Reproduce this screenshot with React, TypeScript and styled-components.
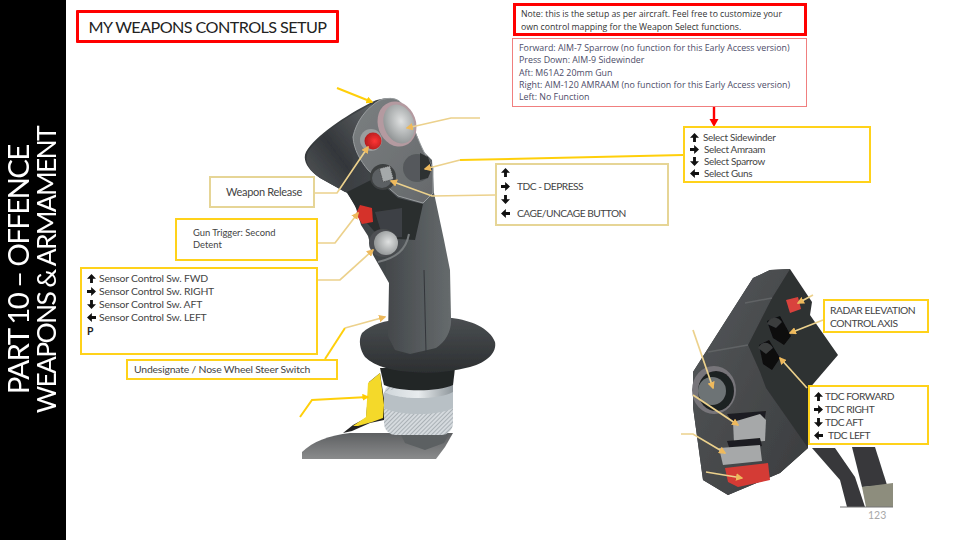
import React from "react";
import styled, { createGlobalStyle } from "styled-components";

const Global = createGlobalStyle`
  html, body { margin: 0; padding: 0; background: #fff; }
  #root { width: 960px; height: 540px; overflow: hidden; }
`;

const Slide = styled.div`
  display: flex;
  width: 960px;
  height: 540px;
  background: #fff;
  font-family: Lato, "Open Sans", sans-serif;
`;

const Sidebar = styled.aside`
  width: 66px;
  height: 540px;
  flex: none;
  background: #000;
  color: #fff;
  display: flex;
  align-items: center;
  justify-content: center;
  padding-right: 3px;
  box-sizing: border-box;
`;

const SideTitle = styled.div`
  writing-mode: vertical-rl;
  transform: rotate(180deg);
  text-align: center;
  white-space: nowrap;
`;

const SideLine = styled.div<{ $size: number }>`
  font-size: ${(p) => p.$size}px;
  line-height: 29px;
  letter-spacing: -1.7px;
`;

const Canvas = styled.main`
  position: relative;
  flex: 1;
  height: 540px;
`;

const Drawing = styled.svg`
  position: absolute;
  left: 0;
  top: 0;
`;

const Title = styled.h1`
  position: absolute;
  left: 10px;
  top: 10px;
  width: 263px;
  height: 33px;
  box-sizing: border-box;
  margin: 0;
  border: 3px solid #f00;
  border-radius: 1px;
  display: flex;
  align-items: center;
  justify-content: center;
  font-size: 16.2px;
  font-weight: 400;
  letter-spacing: -0.58px;
  color: #222;
  white-space: nowrap;
`;

const Label = styled.div<{ $x: number; $y: number; $w: number; $h: number; $tone?: "yellow" | "tan"; $px?: number; $py?: number; $size?: number; $lh?: number; $track?: number }>`
  position: absolute;
  left: ${(p) => p.$x - 66}px;
  top: ${(p) => p.$y}px;
  width: ${(p) => p.$w}px;
  height: ${(p) => p.$h}px;
  box-sizing: border-box;
  background: #fff;
  border: 2px solid ${(p) => (p.$tone === "tan" ? "#e6d596" : "#ffd21a")};
  padding: ${(p) => p.$py ?? 0}px 0 0 ${(p) => p.$px ?? 0}px;
  font-size: ${(p) => p.$size ?? 10.5}px;
  line-height: ${(p) => p.$lh ?? 13}px;
  letter-spacing: ${(p) => p.$track ?? 0}px;
  color: #444;
  white-space: nowrap;
`;

const Row = styled.div<{ $gap?: number; $h?: number }>`
  display: flex;
  align-items: center;
  gap: ${(p) => p.$gap ?? 3}px;
  height: ${(p) => (p.$h ? `${p.$h}px` : "auto")};
`;

const NoteBox = styled.div`
  position: absolute;
  left: 447px;
  top: 3px;
  width: 294px;
  height: 33px;
  box-sizing: border-box;
  border: 3px solid #f00;
  padding: 2px 0 0 5px;
  font-family: "Open Sans", sans-serif;
  font-size: 8.7px;
  line-height: 12.5px;
  color: #333;
  white-space: nowrap;
`;

const MappingBox = styled.div`
  position: absolute;
  left: 446px;
  top: 38px;
  width: 295px;
  height: 69px;
  box-sizing: border-box;
  border: 1px solid #f07f7f;
  padding: 3px 0 0 6px;
  font-family: "Open Sans", sans-serif;
  font-size: 8.85px;
  line-height: 12.3px;
  color: #4c4c68;
  white-space: nowrap;
`;

const PageNumber = styled.span`
  position: absolute;
  left: 802px;
  top: 509px;
  font-size: 10.5px;
  color: #a8a8a8;
`;

const ArrowSvg = styled.svg<{ $dir: number }>`
  flex: none;
  transform: rotate(${(p) => p.$dir}deg);
`;

const dirs = { up: 0, right: 90, down: 180, left: 270 };

function Arrow({ dir, size = 9 }: { dir: keyof typeof dirs; size?: number }) {
  return (
    <ArrowSvg $dir={dirs[dir]} width={size} height={size} viewBox="0 0 10 10">
      <path d="M5 0 L10 5.4 L6.6 5.4 L6.6 10 L3.4 10 L3.4 5.4 L0 5.4 Z" fill="#111" />
    </ArrowSvg>
  );
}

const Bold = styled.span`
  font-weight: 700;
  color: #222;
`;

type Seg = { d: string; tan?: boolean; head?: boolean };
const leaders: Seg[] = [
  { d: "M337 88 L372 102", head: true },
  { d: "M480 118 L451 118 L407 128", tan: true, head: true },
  { d: "M683 155 L460 160" },
  { d: "M460 160 L425 169", tan: true, head: true },
  { d: "M495 195 L432 196 L391 181", tan: true, head: true },
  { d: "M315 193 L337 193 L368 147", tan: true, head: true },
  { d: "M318 243 L335 243 L358 213", tan: true, head: true },
  { d: "M318 280 L340 280 L373 250", tan: true, head: true },
  { d: "M325 359 L345 328" },
  { d: "M345 328 L385 317", tan: true, head: true },
  { d: "M300 417 L312 400 L368 397", head: true },
  { d: "M813 295 L798 303", tan: true, head: true },
  { d: "M823 320 L790 333", tan: true, head: true },
  { d: "M807 388 L780 358", tan: true, head: true },
  { d: "M693 330 L713 388", tan: true, head: true },
  { d: "M693 395 L738 425", tan: true, head: true },
  { d: "M681 434 L693 434 L725 453", tan: true, head: true },
  { d: "M706 472 L742 478", tan: true, head: true },
];

function Artwork() {
  return (
    <Drawing width={894} height={540} viewBox="66 0 894 540">
      <defs>
        <linearGradient id="grip" x1="0" y1="0" x2="1" y2="0">
          <stop offset="0" stopColor="#34383a" />
          <stop offset="0.55" stopColor="#43474a" />
          <stop offset="1" stopColor="#666b6d" />
        </linearGradient>
        <linearGradient id="head" x1="0" y1="1" x2="1" y2="0">
          <stop offset="0" stopColor="#55595b" />
          <stop offset="0.45" stopColor="#33363a" />
          <stop offset="1" stopColor="#5e6264" />
        </linearGradient>
        <linearGradient id="face" x1="0" y1="0" x2="1" y2="1">
          <stop offset="0" stopColor="#7b7f81" />
          <stop offset="1" stopColor="#66696b" />
        </linearGradient>
        <linearGradient id="plate" x1="0" y1="0" x2="0" y2="1">
          <stop offset="0" stopColor="#4a4e51" />
          <stop offset="1" stopColor="#2c2f31" />
        </linearGradient>
        <linearGradient id="knurl" x1="0" y1="0" x2="1" y2="0">
          <stop offset="0" stopColor="#cfd6da" />
          <stop offset="0.5" stopColor="#e8ecee" />
          <stop offset="1" stopColor="#8f979c" />
        </linearGradient>
        <linearGradient id="base" x1="0" y1="0" x2="0" y2="1">
          <stop offset="0" stopColor="#5e6062" />
          <stop offset="1" stopColor="#8a8b8c" />
        </linearGradient>
        <radialGradient id="chrome" cx="0.6" cy="0.45" r="0.7">
          <stop offset="0" stopColor="#dfe1e1" />
          <stop offset="1" stopColor="#85898a" />
        </radialGradient>
        <radialGradient id="redBtn" cx="0.6" cy="0.5" r="0.6">
          <stop offset="0" stopColor="#ff3535" />
          <stop offset="1" stopColor="#b01c1c" />
        </radialGradient>
        <linearGradient id="face2" x1="0" y1="0" x2="1" y2="1">
          <stop offset="0" stopColor="#55585a" />
          <stop offset="1" stopColor="#3a3c3e" />
        </linearGradient>
        <pattern id="mesh" width="3" height="3" patternUnits="userSpaceOnUse" patternTransform="rotate(45)">
          <rect width="3" height="3" fill="#d5dade" />
          <rect width="1" height="3" fill="#aab1b6" />
        </pattern>
        <filter id="soft"><feGaussianBlur stdDeviation="0.55" /></filter>
        <marker id="headTan" viewBox="0 0 10 10" refX="8" refY="5" markerWidth="4.4" markerHeight="4.4" orient="auto-start-reverse">
          <path d="M0 0 L10 5 L0 10 Z" fill="#eeb95c" />
        </marker>
        <marker id="headYellow" viewBox="0 0 10 10" refX="8" refY="5" markerWidth="3.5" markerHeight="3.5" orient="auto-start-reverse">
          <path d="M0 0 L10 5 L0 10 Z" fill="#ffcc00" />
        </marker>
      </defs>

      {/* joystick */}
      <g filter="url(#soft)">
        <path d="M302 459 L302 452 C312 442 330 435 350 433 L453 433 L445 447 L436 459 Z" fill="url(#base)" />
        <path d="M343 433 L353 425 L366 418 L369 382 L380 373 L385 405 L384 420 L370 423 L352 431 Z" fill="#222" />
        <path d="M353 426 L366 417 L368 383 L380 373 L384 405 L383 418 L372 422 L358 426 Z" fill="#f4d92c" />
        <path d="M400 433 L450 433 L444 443 L425 450 L405 443 Z" fill="#5c6062" />
        <rect x="384" y="383" width="69" height="52" rx="12" fill="url(#mesh)" />
        <path d="M384 392 C400 400 438 400 453 390 L453 408 C438 416 400 416 384 408 Z" fill="#b8c0c5" />
        <path d="M384 392 C400 386 438 384 453 382 L453 392 C438 400 400 400 384 392 Z" fill="url(#knurl)" />
        <path d="M380 368 L455 368 L453 385 C438 392 400 392 384 385 Z" fill="#232527" />
        <path d="M362 333 C372 324 385 320 400 320 L452 318 C470 320 490 328 495 342 C497 352 488 362 470 367 C450 372 430 374 412 372 C395 371 375 367 365 357 C360 350 358 340 362 333 Z" fill="url(#plate)" />
        <path d="M388 336 L389 283 L373 255 L368 236 L361 225 L355 205 L347 193 L320 178 C308 170 302 160 306 152 C316 135 345 116 372 102 C383 97 395 97 401 103 C410 115 417 135 422 150 L432 160 L434 193 L444 240 L450 270 L451 318 C452 330 446 342 436 348 L410 354 L395 350 Z" fill="url(#grip)" />
        <path d="M308 152 C318 136 346 117 372 104 L355 137 L352 168 L345 192 L320 178 C308 170 304 160 308 152 Z" fill="url(#head)" />
        <path d="M424 270 L426 352" stroke="#33363a" strokeWidth="1" fill="none" />
        <path d="M353 137 C356 122 366 108 380 100 C390 97 398 98 402 104 C410 118 418 140 424 152 L433 168 L433 193 L423 203 L398 196 L368 170 C360 160 354 150 353 137 Z" fill="url(#face)" stroke="#9a9ea0" strokeWidth="1" />
        <path d="M347 192 L375 178 L398 198 L423 204 L415 240 L380 238 L360 215 Z" fill="#2a2d2f" />
        <path d="M375 212 L402 208 L402 237 L383 238 Z" fill="#3e4144" />
        <path d="M360 205 L372 208 L373 222 L362 224 L356 214 Z" fill="#d5312b" />
        <ellipse cx="397" cy="124" rx="19" ry="23" transform="rotate(-20 397 124)" fill="#b49aa0" />
        <ellipse cx="399" cy="124" rx="15" ry="20" transform="rotate(-20 399 124)" fill="url(#chrome)" />
        <circle cx="371" cy="140" r="11" fill="#9a9d9e" />
        <circle cx="373" cy="141" r="8.5" fill="url(#redBtn)" />
        <circle cx="383" cy="177" r="13" fill="#3c3f41" />
        <circle cx="382" cy="178" r="10" fill="#5c6063" />
        <rect x="381" y="167" width="11" height="14" rx="1" transform="rotate(-15 386 174)" fill="#a5a9aa" stroke="#444" strokeDasharray="1 1" />
        <circle cx="417" cy="168" r="14" fill="#55595b" />
        <path d="M420 153 L428 157 L432 168 L428 178 L420 180 Z" fill="#2e3133" />
        <circle cx="383" cy="243" r="14" fill="#4d5052" />
        <ellipse cx="386" cy="243" rx="12" ry="12" fill="url(#chrome)" />
        <path d="M409 234 C406 250 396 258 378 262" fill="none" stroke="#777b7d" strokeWidth="2" />
      </g>

      {/* throttle */}
      <g filter="url(#soft)">
        <path d="M812 448 L840 480 L847 507 L865 507 L855 477 L835 448 Z" fill="#37393b" />
        <path d="M852 447 L862 487 L887 485 L875 447 Z" fill="#37393b" />
        <path d="M862 487 L893 483 L893 507 L866 507 Z" fill="#8d8d7d" />
        <path d="M840 507 L893 507" stroke="#777" strokeWidth="1.2" />
        <path d="M693 372 L753 278 L770 270 L790 269 L812 302 L810 315 L838 355 L808 390 L808 448 L780 473 L728 495 L703 480 L693 407 Z" fill="#2f3133" />
        <path d="M693 372 L753 278 L770 270 L790 269 L772 298 L748 345 L760 372 L766 388 L808 448 L780 473 L728 495 L703 480 L693 407 Z" fill="url(#face2)" />
        <path d="M745 303 L772 298 M708 352 L748 345" stroke="#606365" strokeWidth="1.5" fill="none" />
        <ellipse cx="714" cy="390" rx="22" ry="24" fill="#77757a" />
        <ellipse cx="716" cy="391" rx="18" ry="20" fill="#1f2123" />
        <circle cx="712" cy="391" r="14" fill="#6d7375" />
        <path d="M727 414 L766 411 L764 423 L733 424 Z" fill="#1d1e20" />
        <path d="M733 422 L760 414 L766 420 L765 441 L734 443 Z" fill="#a6a8a9" />
        <path d="M727 441 L760 438 L762 446 L730 450 Z" fill="#1d1e20" />
        <path d="M719 448 L760 445 L762 461 L723 465 Z" fill="#a6a8a9" />
        <path d="M725 468 L768 463 L770 480 L738 487 L728 482 Z" fill="#d43a35" />
        <path d="M767 321 L780 316 L791 336 L784 345 L773 338 Z" fill="#0b0c0d" />
        <path d="M767 324 C770 316 778 316 782 322 L776 328 Z" fill="#3a3c3e" />
        <path d="M759 345 L769 340 L780 358 L772 370 L763 364 Z" fill="#0b0c0d" />
        <path d="M758 348 C762 340 770 342 773 348 L766 354 Z" fill="#3a3c3e" />
        <path d="M786 300 L798 297 L801 309 L790 313 Z" fill="#d9423d" />
      </g>

      {/* leader lines */}
      {leaders.map((l, i) => (
        <path
          key={i}
          d={l.d}
          fill="none"
          stroke={l.tan ? "#ecd18c" : "#ffcf0a"}
          strokeWidth={l.tan ? 1.7 : 2}
          markerEnd={l.head ? (l.tan ? "url(#headTan)" : "url(#headYellow)") : undefined}
        />
      ))}
      <path d="M714 107 L714 121" stroke="#f00" strokeWidth="2.4" />
      <path d="M709.5 119 L718.5 119 L714 127 Z" fill="#f00" />
    </Drawing>
  );
}

export default function App() {
  return (
    <Slide>
      <Global />
      <Sidebar>
        <SideTitle>
          <SideLine $size={29.5}>PART 10 – OFFENCE</SideLine>
          <SideLine $size={26.5}>WEAPONS &amp; ARMAMENT</SideLine>
        </SideTitle>
      </Sidebar>
      <Canvas>
        <Artwork />
        <Title>MY WEAPONS CONTROLS SETUP</Title>

        <NoteBox>
          Note: this is the setup as per aircraft. Feel free to customize your
          <br />
          own control mapping for the Weapon Select functions.
        </NoteBox>
        <MappingBox>
          Forward: AIM-7 Sparrow (no function for this Early Access version)
          <br />
          Press Down: AIM-9 Sidewinder
          <br />
          Aft: M61A2 20mm Gun
          <br />
          Right: AIM-120 AMRAAM (no function for this Early Access version)
          <br />
          Left: No Function
        </MappingBox>

        <Label $x={209} $y={176} $w={106} $h={32} $tone="tan" $px={15} $py={7} $size={11} $track={-0.3}>
          Weapon Release
        </Label>
        <Label $x={175} $y={218} $w={143} $h={43} $px={16} $py={7} $size={9.4} $lh={12}>
          Gun Trigger: Second
          <br />
          Detent
        </Label>
        <Label $x={80} $y={267} $w={238} $h={88} $px={5} $py={3} $size={10.4} $track={-0.2}>
          <Row><Arrow dir="up" /><span>Sensor Control Sw. FWD</span></Row>
          <Row><Arrow dir="right" /><span>Sensor Control Sw. RIGHT</span></Row>
          <Row><Arrow dir="down" /><span>Sensor Control Sw. AFT</span></Row>
          <Row><Arrow dir="left" /><span>Sensor Control Sw. LEFT</span></Row>
          <Row $h={15}><Bold>P</Bold></Row>
        </Label>
        <Label $x={126} $y={359} $w={212} $h={21} $px={6} $py={2} $size={10.4} $track={-0.18}>
          Undesignate / Nose Wheel Steer Switch
        </Label>

        <Label $x={683} $y={126} $w={188} $h={57} $px={5} $py={3} $size={9.9} $lh={12} $track={-0.28}>
          <Row $gap={4}><Arrow dir="up" /><span>Select Sidewinder</span></Row>
          <Row $gap={5}><Arrow dir="right" /><span>Select Amraam</span></Row>
          <Row $gap={5}><Arrow dir="down" /><span>Select Sparrow</span></Row>
          <Row $gap={5}><Arrow dir="left" /><span>Select Guns</span></Row>
        </Label>
        <Label $x={495} $y={163} $w={174} $h={63} $tone="tan" $px={4} $py={1} $size={10.2} $lh={13} $track={-0.5}>
          <Row $h={13}><Arrow dir="up" /></Row>
          <Row $h={14} $gap={7}><Arrow dir="right" /><span>TDC - DEPRESS</span></Row>
          <Row $h={12}><Arrow dir="down" /></Row>
          <Row $h={17} $gap={7}><Arrow dir="left" /><span>CAGE/UNCAGE BUTTON</span></Row>
        </Label>

        <Label $x={823} $y={299} $w={106} $h={34} $px={5} $py={3} $size={10.3} $track={-0.45}>
          RADAR ELEVATION
          <br />
          CONTROL AXIS
        </Label>
        <Label $x={808} $y={385} $w={121} $h={60} $px={4} $py={3} $size={10.2} $track={-0.5}>
          <Row $gap={2}><Arrow dir="up" /><span>TDC FORWARD</span></Row>
          <Row $gap={2}><Arrow dir="right" /><span>TDC RIGHT</span></Row>
          <Row $gap={2}><Arrow dir="down" /><span>TDC AFT</span></Row>
          <Row $gap={5}><Arrow dir="left" /><span>TDC LEFT</span></Row>
        </Label>

        <PageNumber>123</PageNumber>
      </Canvas>
    </Slide>
  );
}
